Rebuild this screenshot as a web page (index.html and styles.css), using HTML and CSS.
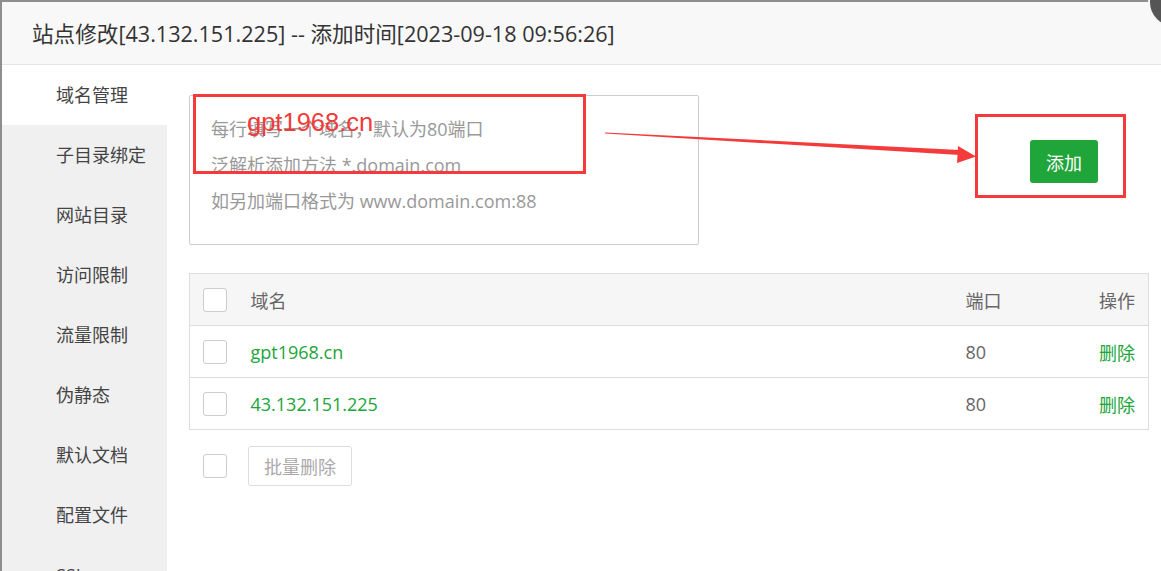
FILE: index.html
```html
<!DOCTYPE html>
<html lang="zh-CN">
<head>
<meta charset="utf-8">
<title>站点修改</title>
<link rel="stylesheet" href="styles.css">
</head>
<body>
<div class="dialog">
  <div class="header">站点修改[43.132.151.225] -- 添加时间[2023-09-18 09:56:26]</div>
  <div class="layout">
    <ul class="sidebar">
      <li class="nav-item active">域名管理</li>
      <li class="nav-item">子目录绑定</li>
      <li class="nav-item">网站目录</li>
      <li class="nav-item">访问限制</li>
      <li class="nav-item">流量限制</li>
      <li class="nav-item">伪静态</li>
      <li class="nav-item">默认文档</li>
      <li class="nav-item">配置文件</li>
      <li class="nav-item">SSL</li>
    </ul>
    <div class="main">
      <div class="top-row">
        <div class="domain-input">
          <p class="ph">每行填写一个域名，默认为80端口</p>
          <p class="ph">泛解析添加方法 *.domain.com</p>
          <p class="ph">如另加端口格式为 www.domain.com:88</p>
        </div>
        <button class="btn-add">添加</button>
      </div>
      <table class="domain-table">
        <colgroup>
          <col class="c-check"><col class="c-name"><col class="c-port"><col class="c-op">
        </colgroup>
        <thead>
          <tr><th><span class="checkbox"></span></th><th>域名</th><th>端口</th><th class="op">操作</th></tr>
        </thead>
        <tbody>
          <tr><td><span class="checkbox"></span></td><td class="link">gpt1968.cn</td><td>80</td><td class="op link">删除</td></tr>
          <tr><td><span class="checkbox"></span></td><td class="link">43.132.151.225</td><td>80</td><td class="op link">删除</td></tr>
        </tbody>
      </table>
      <div class="bulk">
        <span class="checkbox"></span>
        <button class="btn-bulk">批量删除</button>
      </div>
    </div>
  </div>
</div>

<div class="close-btn"></div>

<div class="mark mark-input"></div>
<div class="mark-text">gpt1968.cn</div>
<div class="mark mark-btn"></div>
<svg class="arrow" width="1161" height="571" viewBox="0 0 1161 571">
  <polygon points="605,132.5 960,150 960,155 605,133.5" fill="#f43a3a"/>
  <polygon points="958,146 976,156.5 957,163" fill="#f43a3a"/>
</svg>
</body>
</html>
```

FILE: styles.css
```css
* { box-sizing: border-box; }
html, body { margin: 0; padding: 0; }
body {
  width: 1161px;
  height: 571px;
  overflow: hidden;
  background: #8e8e8e;
  font-family: "Open Sans", "Noto Sans CJK SC", sans-serif;
  position: relative;
}
.dialog {
  margin: 2px 0 0 2px;
  width: 1200px;
  height: 620px;
  background: #fff;
}
.header {
  height: 63px;
  line-height: 64px;
  padding-left: 30px;
  background: #f8f8f8;
  border-bottom: 1px solid #e5e5e5;
  color: #333;
  font-size: 21.6px;
}
.layout { display: flex; }
.sidebar {
  list-style: none;
  margin: 0;
  padding: 0;
  width: 165px;
  height: 560px;
  background: #f0f0f0;
}
.nav-item {
  height: 60px;
  line-height: 60px;
  padding-left: 54px;
  font-size: 18px;
  color: #444;
}
.nav-item.active { background: #fff; }
.main {
  padding: 30px 0 0 22px;
  width: 982px;
}
.top-row {
  display: flex;
  align-items: flex-start;
}
.domain-input {
  width: 510px;
  height: 150px;
  border: 1px solid #ccc;
  border-radius: 2px;
  padding: 15px 20px 0 21px;
}
.ph {
  margin: 0;
  line-height: 36px;
  font-size: 18px;
  color: #999;
}
.btn-add {
  margin: 45px 51px 0 auto;
  width: 68px;
  height: 43px;
  border: 0;
  border-radius: 3px;
  background: #20a53a;
  color: #fff;
  font-family: inherit;
  font-size: 18px;
  padding: 0;
}
.domain-table {
  margin-top: 28px;
  width: 960px;
  border-collapse: collapse;
  table-layout: fixed;
  border: 1px solid #ddd;
  font-size: 18px;
  color: #666;
}
.c-check { width: 61px; }
.c-name { width: 715px; }
.c-port { width: 100px; }
.domain-table th, .domain-table td {
  height: 52px;
  padding: 0;
  text-align: left;
  font-weight: normal;
  vertical-align: middle;
  border-bottom: 1px solid #ddd;
}
.domain-table th { background: #f6f6f6; }
.domain-table th:first-child, .domain-table td:first-child { padding-left: 13px; }
.domain-table .op { text-align: right; padding-right: 13px; }
.link { color: #20a53a; }
.checkbox {
  display: block;
  width: 24px;
  height: 24px;
  border: 1px solid #ccc;
  border-radius: 3px;
  background: #fff;
}
.bulk {
  margin-top: 16px;
  display: flex;
  align-items: center;
  padding-left: 14px;
}
.btn-bulk {
  margin-left: 21px;
  width: 104px;
  height: 40px;
  padding: 0;
  border: 1px solid #ddd;
  border-radius: 3px;
  background: #fff;
  color: #aaa;
  font-family: inherit;
  font-size: 18px;
}
.close-btn {
  position: absolute;
  left: 1148px;
  top: -24px;
  width: 52px;
  height: 52px;
  border-radius: 50%;
  background: #555;
  border: 2px solid #f4f4f4;
}
.mark {
  position: absolute;
  border: 3px solid #f43a3a;
}
.mark-input { left: 193px; top: 94px; width: 393px; height: 80px; }
.mark-btn { left: 975px; top: 114px; width: 151px; height: 84px; }
.mark-text {
  position: absolute;
  left: 247px;
  top: 107px;
  font-family: "Liberation Sans", Arial, sans-serif;
  font-size: 25.5px;
  line-height: 30px;
  color: #f43a3a;
}
.arrow {
  position: absolute;
  left: 0;
  top: 0;
  pointer-events: none;
}
```
